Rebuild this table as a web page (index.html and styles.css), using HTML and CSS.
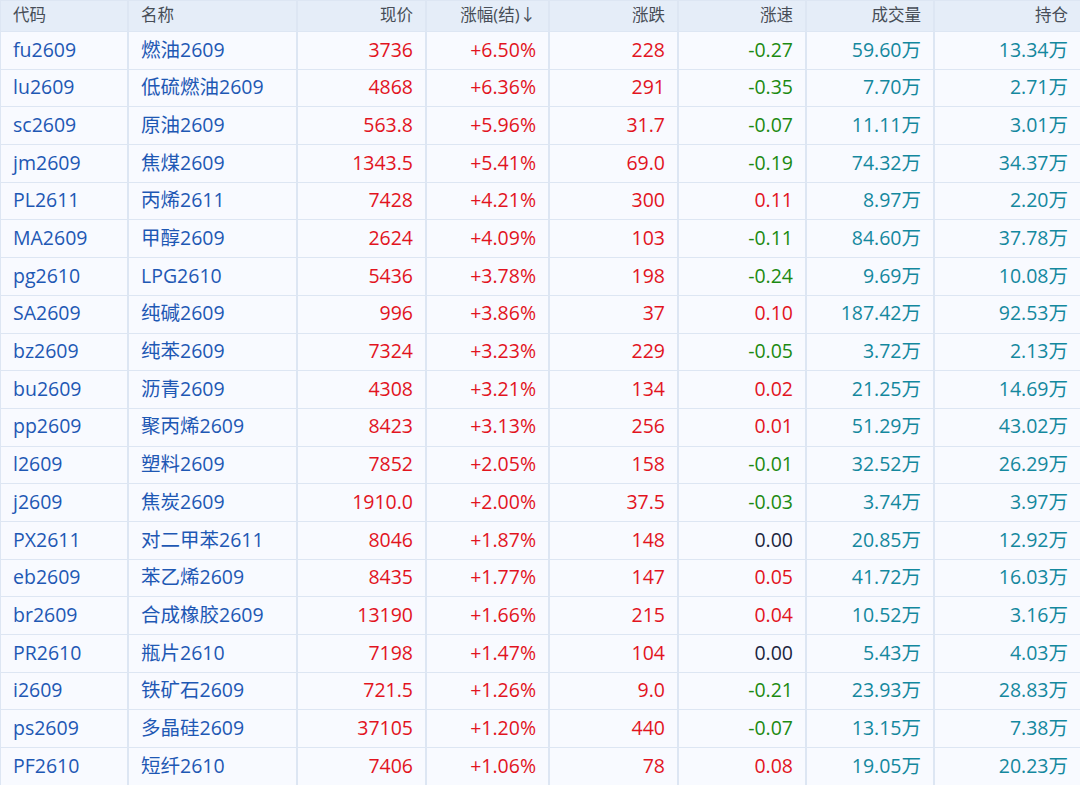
FILE: index.html
```html
<!DOCTYPE html>
<html lang="zh">
<head>
<meta charset="utf-8">
<link rel="stylesheet" href="styles.css">
</head>
<body>
<div class="tbl">
  <div class="row head">
    <div class="c l">代码</div><div class="c l">名称</div><div class="c">现价</div><div class="c">涨幅(结)↓</div><div class="c">涨跌</div><div class="c">涨速</div><div class="c">成交量</div><div class="c">持仓</div>
  </div>
  <div class="row"><div class="c l b">fu2609</div><div class="c l b">燃油2609</div><div class="c r">3736</div><div class="c r">+6.50%</div><div class="c r">228</div><div class="c g">-0.27</div><div class="c t">59.60万</div><div class="c t">13.34万</div></div>
  <div class="row"><div class="c l b">lu2609</div><div class="c l b">低硫燃油2609</div><div class="c r">4868</div><div class="c r">+6.36%</div><div class="c r">291</div><div class="c g">-0.35</div><div class="c t">7.70万</div><div class="c t">2.71万</div></div>
  <div class="row"><div class="c l b">sc2609</div><div class="c l b">原油2609</div><div class="c r">563.8</div><div class="c r">+5.96%</div><div class="c r">31.7</div><div class="c g">-0.07</div><div class="c t">11.11万</div><div class="c t">3.01万</div></div>
  <div class="row"><div class="c l b">jm2609</div><div class="c l b">焦煤2609</div><div class="c r">1343.5</div><div class="c r">+5.41%</div><div class="c r">69.0</div><div class="c g">-0.19</div><div class="c t">74.32万</div><div class="c t">34.37万</div></div>
  <div class="row"><div class="c l b">PL2611</div><div class="c l b">丙烯2611</div><div class="c r">7428</div><div class="c r">+4.21%</div><div class="c r">300</div><div class="c r">0.11</div><div class="c t">8.97万</div><div class="c t">2.20万</div></div>
  <div class="row"><div class="c l b">MA2609</div><div class="c l b">甲醇2609</div><div class="c r">2624</div><div class="c r">+4.09%</div><div class="c r">103</div><div class="c g">-0.11</div><div class="c t">84.60万</div><div class="c t">37.78万</div></div>
  <div class="row"><div class="c l b">pg2610</div><div class="c l b">LPG2610</div><div class="c r">5436</div><div class="c r">+3.78%</div><div class="c r">198</div><div class="c g">-0.24</div><div class="c t">9.69万</div><div class="c t">10.08万</div></div>
  <div class="row"><div class="c l b">SA2609</div><div class="c l b">纯碱2609</div><div class="c r">996</div><div class="c r">+3.86%</div><div class="c r">37</div><div class="c r">0.10</div><div class="c t">187.42万</div><div class="c t">92.53万</div></div>
  <div class="row"><div class="c l b">bz2609</div><div class="c l b">纯苯2609</div><div class="c r">7324</div><div class="c r">+3.23%</div><div class="c r">229</div><div class="c g">-0.05</div><div class="c t">3.72万</div><div class="c t">2.13万</div></div>
  <div class="row"><div class="c l b">bu2609</div><div class="c l b">沥青2609</div><div class="c r">4308</div><div class="c r">+3.21%</div><div class="c r">134</div><div class="c r">0.02</div><div class="c t">21.25万</div><div class="c t">14.69万</div></div>
  <div class="row"><div class="c l b">pp2609</div><div class="c l b">聚丙烯2609</div><div class="c r">8423</div><div class="c r">+3.13%</div><div class="c r">256</div><div class="c r">0.01</div><div class="c t">51.29万</div><div class="c t">43.02万</div></div>
  <div class="row"><div class="c l b">l2609</div><div class="c l b">塑料2609</div><div class="c r">7852</div><div class="c r">+2.05%</div><div class="c r">158</div><div class="c g">-0.01</div><div class="c t">32.52万</div><div class="c t">26.29万</div></div>
  <div class="row"><div class="c l b">j2609</div><div class="c l b">焦炭2609</div><div class="c r">1910.0</div><div class="c r">+2.00%</div><div class="c r">37.5</div><div class="c g">-0.03</div><div class="c t">3.74万</div><div class="c t">3.97万</div></div>
  <div class="row"><div class="c l b">PX2611</div><div class="c l b">对二甲苯2611</div><div class="c r">8046</div><div class="c r">+1.87%</div><div class="c r">148</div><div class="c z">0.00</div><div class="c t">20.85万</div><div class="c t">12.92万</div></div>
  <div class="row"><div class="c l b">eb2609</div><div class="c l b">苯乙烯2609</div><div class="c r">8435</div><div class="c r">+1.77%</div><div class="c r">147</div><div class="c r">0.05</div><div class="c t">41.72万</div><div class="c t">16.03万</div></div>
  <div class="row"><div class="c l b">br2609</div><div class="c l b">合成橡胶2609</div><div class="c r">13190</div><div class="c r">+1.66%</div><div class="c r">215</div><div class="c r">0.04</div><div class="c t">10.52万</div><div class="c t">3.16万</div></div>
  <div class="row"><div class="c l b">PR2610</div><div class="c l b">瓶片2610</div><div class="c r">7198</div><div class="c r">+1.47%</div><div class="c r">104</div><div class="c z">0.00</div><div class="c t">5.43万</div><div class="c t">4.03万</div></div>
  <div class="row"><div class="c l b">i2609</div><div class="c l b">铁矿石2609</div><div class="c r">721.5</div><div class="c r">+1.26%</div><div class="c r">9.0</div><div class="c g">-0.21</div><div class="c t">23.93万</div><div class="c t">28.83万</div></div>
  <div class="row"><div class="c l b">ps2609</div><div class="c l b">多晶硅2609</div><div class="c r">37105</div><div class="c r">+1.20%</div><div class="c r">440</div><div class="c g">-0.07</div><div class="c t">13.15万</div><div class="c t">7.38万</div></div>
  <div class="row"><div class="c l b">PF2610</div><div class="c l b">短纤2610</div><div class="c r">7406</div><div class="c r">+1.06%</div><div class="c r">78</div><div class="c r">0.08</div><div class="c t">19.05万</div><div class="c t">20.23万</div></div>
</div>
</body>
</html>
```
FILE: styles.css
```css
html, body {
  margin: 0;
  padding: 0;
  background: #f8faff;
  overflow: hidden;
}
.tbl {
  width: 1080px;
  font-family: "Open Sans", "Noto Sans CJK SC", sans-serif;
  border-top: 1px solid #dde6f3;
}
.row {
  display: grid;
  grid-template-columns: 129px 169px 129px 123px 129px 128px 128px 145px;
  height: 37.7px;
  box-sizing: border-box;
  border-bottom: 1px solid #dde6f3;
  background: #f8faff;
}
.row.head {
  height: 31px;
  background: #e5edf8;
  color: #474d57;
}
.c {
  display: flex;
  align-items: center;
  justify-content: flex-end;
  padding: 0 12px 2px;
  border-right: 2px solid #dde6f3;
  font-size: 19.5px;
  line-height: 1;
  white-space: nowrap;
  overflow: hidden;
}
.head .c { font-size: 16.5px; padding-bottom: 1px; }
.c:first-child { border-left: 1px solid #dde6f3; }
.c:last-child { border-right: none; }
.c.l { justify-content: flex-start; }
.b { color: #1e58b4; }
.r { color: #e2141e; }
.g { color: #1c8a12; }
.t { color: #14889e; }
.z { color: #1b2540; }
```
